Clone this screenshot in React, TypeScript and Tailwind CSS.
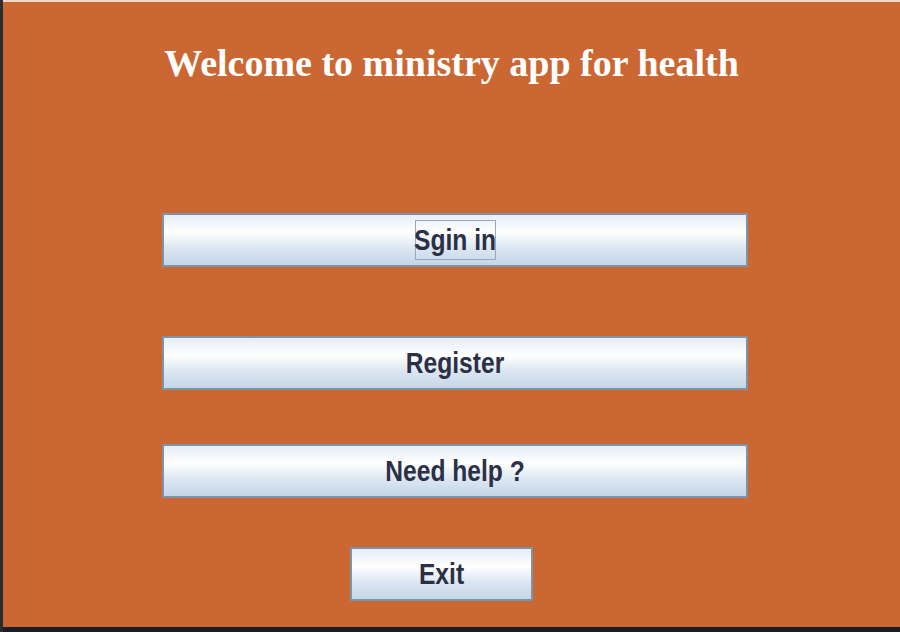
import React from "react";

function Btn({ label, w, focus }: { label: string; w: string; focus?: boolean }) {
  return (
    <div
      className={`${w} h-[54px] border-2 border-[#7d93a8] bg-[linear-gradient(180deg,#e6edf6_0%,#ffffff_35%,#dde7f2_65%,#c4d6e7_100%)] flex items-center justify-center`}
    >
      <div
        className={`${focus ? "border border-[#9aa9b8] w-[81px]" : "border border-transparent"} h-[40px] flex items-center justify-center`}
      >
        <span
          className="inline-block scale-x-[0.82] text-[30px] font-bold text-[#2b3046] leading-none whitespace-nowrap"
          style={{ fontFamily: '"Liberation Sans", Arial, sans-serif' }}
        >
          {label}
        </span>
      </div>
    </div>
  );
}

export default function App() {
  return (
    <div className="w-[900px] h-[632px] bg-[#1b1f24] flex">
      <div className="w-[3px] h-full bg-[#2b2d30]" />
      <div className="flex-1 h-[627px] bg-[#cb6733] border-t-2 border-[#efd9cc] flex flex-col">
        <div
          className="mt-[42px] self-center text-[38px] font-bold text-white leading-none whitespace-nowrap"
          style={{ fontFamily: '"Liberation Serif", "Times New Roman", serif' }}
        >
          Welcome to ministry app for health
        </div>
        <div className="mt-[131px] ml-[159px] flex flex-col items-start">
          <Btn label="Sgin in" w="w-[586px]" focus />
          <div className="h-[69px]" />
          <Btn label="Register" w="w-[586px]" />
          <div className="h-[54px]" />
          <Btn label="Need help ?" w="w-[586px]" />
          <div className="h-[49px]" />
          <div className="ml-[188px]">
            <Btn label="Exit" w="w-[183px]" />
          </div>
        </div>
      </div>
    </div>
  );
}
